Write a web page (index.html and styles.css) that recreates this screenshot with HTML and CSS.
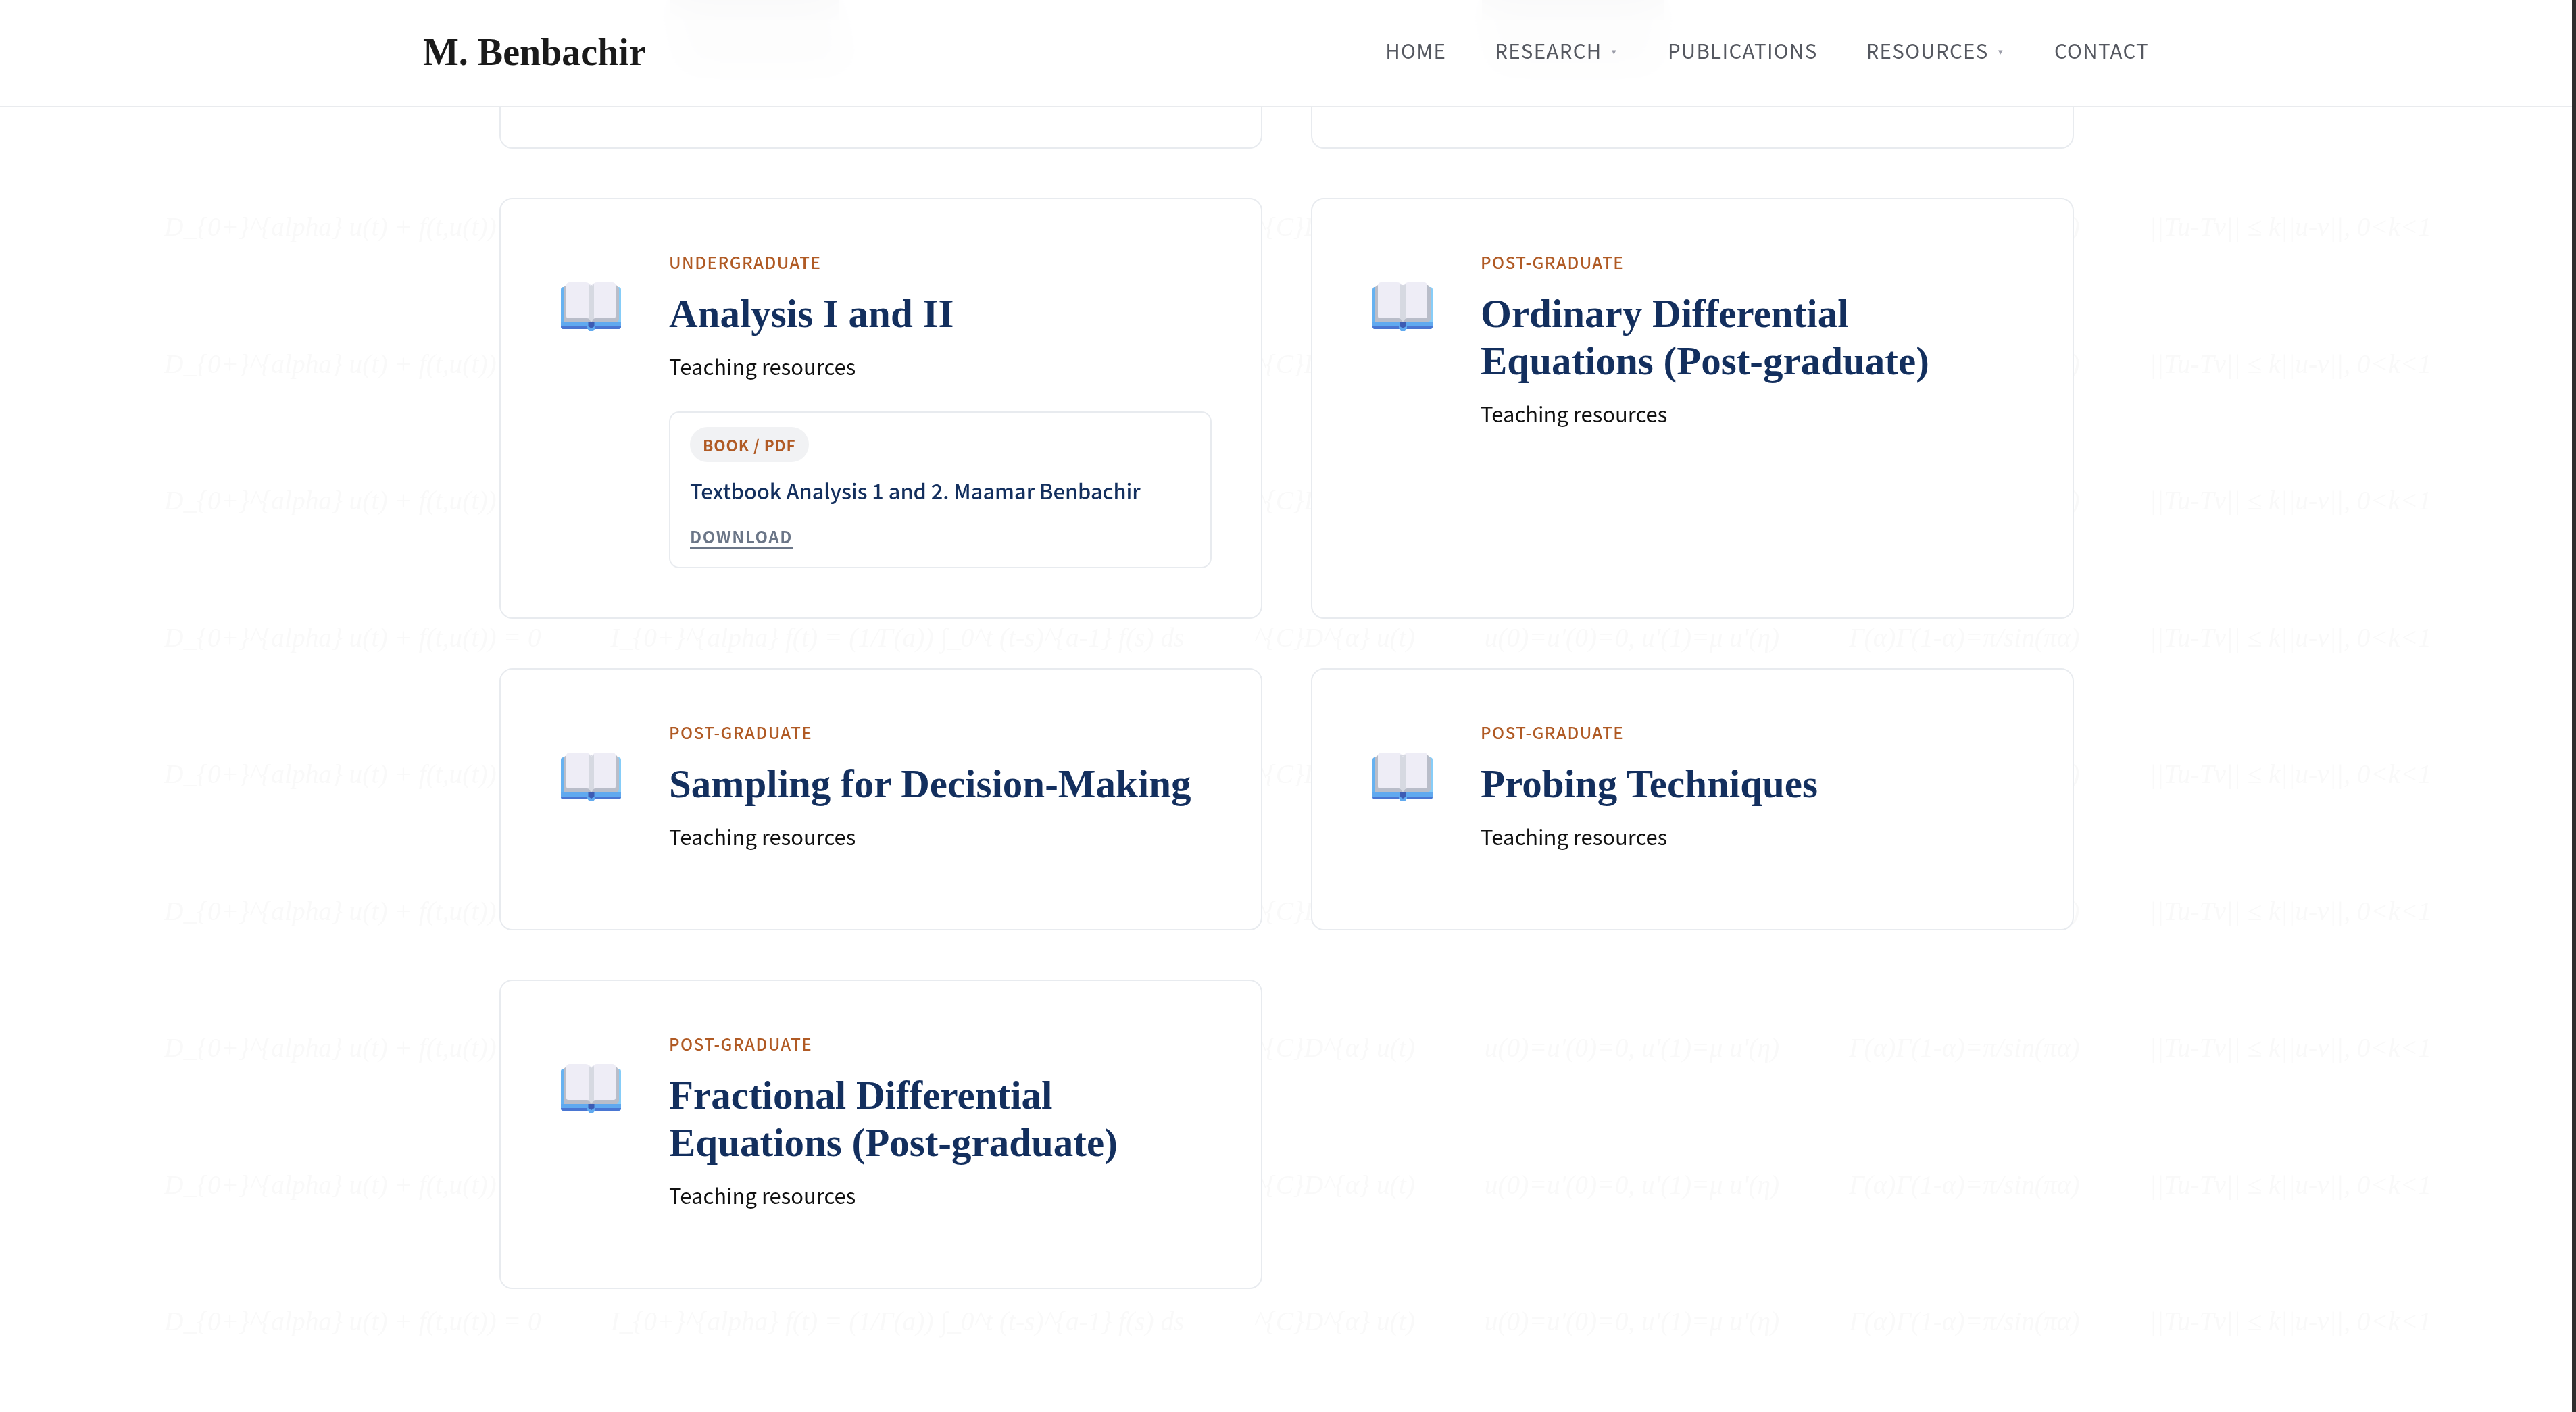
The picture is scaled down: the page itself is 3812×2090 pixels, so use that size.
FILE: index.html
```html
<!DOCTYPE html>
<html lang="en">
<head>
<meta charset="utf-8">
<title>M. Benbachir</title>
<link rel="stylesheet" href="styles.css">
</head>
<body>
<div class="formulas" aria-hidden="true">
  <div class="formula-row"><span>D_{0+}^{alpha} u(t) + f(t,u(t)) = 0</span><span>I_{0+}^{alpha} f(t) = (1/Γ(a)) ∫_0^t (t-s)^{a-1} f(s) ds</span><span>^{C}D^{α} u(t)</span><span>u(0)=u'(0)=0, u'(1)=μ u'(η)</span><span>Γ(α)Γ(1-α)=π/sin(πα)</span><span>||Tu-Tv|| ≤ k||u-v||, 0&lt;k&lt;1</span></div>
  <div class="formula-row"><span>D_{0+}^{alpha} u(t) + f(t,u(t)) = 0</span><span>I_{0+}^{alpha} f(t) = (1/Γ(a)) ∫_0^t (t-s)^{a-1} f(s) ds</span><span>^{C}D^{α} u(t)</span><span>u(0)=u'(0)=0, u'(1)=μ u'(η)</span><span>Γ(α)Γ(1-α)=π/sin(πα)</span><span>||Tu-Tv|| ≤ k||u-v||, 0&lt;k&lt;1</span></div>
  <div class="formula-row"><span>D_{0+}^{alpha} u(t) + f(t,u(t)) = 0</span><span>I_{0+}^{alpha} f(t) = (1/Γ(a)) ∫_0^t (t-s)^{a-1} f(s) ds</span><span>^{C}D^{α} u(t)</span><span>u(0)=u'(0)=0, u'(1)=μ u'(η)</span><span>Γ(α)Γ(1-α)=π/sin(πα)</span><span>||Tu-Tv|| ≤ k||u-v||, 0&lt;k&lt;1</span></div>
  <div class="formula-row"><span>D_{0+}^{alpha} u(t) + f(t,u(t)) = 0</span><span>I_{0+}^{alpha} f(t) = (1/Γ(a)) ∫_0^t (t-s)^{a-1} f(s) ds</span><span>^{C}D^{α} u(t)</span><span>u(0)=u'(0)=0, u'(1)=μ u'(η)</span><span>Γ(α)Γ(1-α)=π/sin(πα)</span><span>||Tu-Tv|| ≤ k||u-v||, 0&lt;k&lt;1</span></div>
  <div class="formula-row"><span>D_{0+}^{alpha} u(t) + f(t,u(t)) = 0</span><span>I_{0+}^{alpha} f(t) = (1/Γ(a)) ∫_0^t (t-s)^{a-1} f(s) ds</span><span>^{C}D^{α} u(t)</span><span>u(0)=u'(0)=0, u'(1)=μ u'(η)</span><span>Γ(α)Γ(1-α)=π/sin(πα)</span><span>||Tu-Tv|| ≤ k||u-v||, 0&lt;k&lt;1</span></div>
  <div class="formula-row"><span>D_{0+}^{alpha} u(t) + f(t,u(t)) = 0</span><span>I_{0+}^{alpha} f(t) = (1/Γ(a)) ∫_0^t (t-s)^{a-1} f(s) ds</span><span>^{C}D^{α} u(t)</span><span>u(0)=u'(0)=0, u'(1)=μ u'(η)</span><span>Γ(α)Γ(1-α)=π/sin(πα)</span><span>||Tu-Tv|| ≤ k||u-v||, 0&lt;k&lt;1</span></div>
  <div class="formula-row"><span>D_{0+}^{alpha} u(t) + f(t,u(t)) = 0</span><span>I_{0+}^{alpha} f(t) = (1/Γ(a)) ∫_0^t (t-s)^{a-1} f(s) ds</span><span>^{C}D^{α} u(t)</span><span>u(0)=u'(0)=0, u'(1)=μ u'(η)</span><span>Γ(α)Γ(1-α)=π/sin(πα)</span><span>||Tu-Tv|| ≤ k||u-v||, 0&lt;k&lt;1</span></div>
  <div class="formula-row"><span>D_{0+}^{alpha} u(t) + f(t,u(t)) = 0</span><span>I_{0+}^{alpha} f(t) = (1/Γ(a)) ∫_0^t (t-s)^{a-1} f(s) ds</span><span>^{C}D^{α} u(t)</span><span>u(0)=u'(0)=0, u'(1)=μ u'(η)</span><span>Γ(α)Γ(1-α)=π/sin(πα)</span><span>||Tu-Tv|| ≤ k||u-v||, 0&lt;k&lt;1</span></div>
  <div class="formula-row"><span>D_{0+}^{alpha} u(t) + f(t,u(t)) = 0</span><span>I_{0+}^{alpha} f(t) = (1/Γ(a)) ∫_0^t (t-s)^{a-1} f(s) ds</span><span>^{C}D^{α} u(t)</span><span>u(0)=u'(0)=0, u'(1)=μ u'(η)</span><span>Γ(α)Γ(1-α)=π/sin(πα)</span><span>||Tu-Tv|| ≤ k||u-v||, 0&lt;k&lt;1</span></div>
  <div class="formula-row"><span>D_{0+}^{alpha} u(t) + f(t,u(t)) = 0</span><span>I_{0+}^{alpha} f(t) = (1/Γ(a)) ∫_0^t (t-s)^{a-1} f(s) ds</span><span>^{C}D^{α} u(t)</span><span>u(0)=u'(0)=0, u'(1)=μ u'(η)</span><span>Γ(α)Γ(1-α)=π/sin(πα)</span><span>||Tu-Tv|| ≤ k||u-v||, 0&lt;k&lt;1</span></div>
</div>

<header class="site-header">
  <div class="header-inner">
    <a class="logo" href="#">M. Benbachir</a>
    <nav class="nav">
      <a href="#">HOME</a>
      <a href="#">RESEARCH<span class="caret">▾</span></a>
      <a href="#">PUBLICATIONS</a>
      <a href="#">RESOURCES<span class="caret">▾</span></a>
      <a href="#">CONTACT</a>
    </nav>
  </div>
</header>

<main class="grid">
  <article class="card card-under">
    <div class="ghost ghost-title"></div>
    <div class="ghost ghost-desc"></div>
  </article>
  <article class="card card-under">
    <div class="ghost ghost-title ghost-wide"></div>
    <div class="ghost ghost-desc"></div>
  </article>

  <article class="card">
    <div class="icon"><svg class="book" viewBox="0 0 89 74"><use href="#book-art"/></svg></div>
    <div class="body">
      <div class="tag">UNDERGRADUATE</div>
      <h2 class="title">Analysis I and II</h2>
      <p class="desc">Teaching resources</p>
      <div class="resource">
        <span class="pill">BOOK / PDF</span>
        <a class="res-title" href="#">Textbook Analysis 1 and 2. Maamar Benbachir</a>
        <a class="download" href="#">DOWNLOAD</a>
      </div>
    </div>
  </article>
  <article class="card">
    <div class="icon"><svg class="book" viewBox="0 0 89 74"><use href="#book-art"/></svg></div>
    <div class="body"><div class="tag">POST-GRADUATE</div><h2 class="title">Ordinary Differential Equations (Post-graduate)</h2><p class="desc">Teaching resources</p></div>
  </article>

  <article class="card">
    <div class="icon"><svg class="book" viewBox="0 0 89 74"><use href="#book-art"/></svg></div>
    <div class="body"><div class="tag">POST-GRADUATE</div><h2 class="title">Sampling for Decision-Making</h2><p class="desc">Teaching resources</p></div>
  </article>
  <article class="card">
    <div class="icon"><svg class="book" viewBox="0 0 89 74"><use href="#book-art"/></svg></div>
    <div class="body"><div class="tag">POST-GRADUATE</div><h2 class="title">Probing Techniques</h2><p class="desc">Teaching resources</p></div>
  </article>

  <article class="card">
    <div class="icon"><svg class="book" viewBox="0 0 89 74"><use href="#book-art"/></svg></div>
    <div class="body"><div class="tag">POST-GRADUATE</div><h2 class="title">Fractional Differential Equations (Post-graduate)</h2><p class="desc">Teaching resources</p></div>
  </article>
</main>

<div class="scrollbar"></div>

<svg class="defs" width="0" height="0" aria-hidden="true">
  <defs>
    <g id="book-art">
      <path d="M4 8h41v62H4a4 4 0 0 1-4-4V12a4 4 0 0 1 4-4z" fill="#66b2f1"/>
      <path d="M45 8h40a4 4 0 0 1 4 4v54a4 4 0 0 1-4 4H45z" fill="#86cdf8"/>
      <path d="M0 60h89v6a4 4 0 0 1-4 4H4a4 4 0 0 1-4-4z" fill="#60a9ef"/>
      <path d="M0 66h89a4 4 0 0 1-4 4H4a4 4 0 0 1-4-4z" fill="#4a76d2"/>
      <path d="M39 60h12v9l-3 4h-6l-3-4z" fill="#60a9ef"/>
      <path d="M40.500 60h9v6l-4.500 3-4.500-3z" fill="#3d5cb4"/>
      <path d="M4 8l4-3h74l4 5v46l-3 4H4z" fill="#b9bdc9"/>
      <path d="M8 5c0-2 2-4 5-4h23c4 0 7 2 9 5v51c-2-3-5-3-9-3H11c-2 0-3-1-3-3z" fill="#eeedf6"/>
      <path d="M81 5c0-2-2-4-5-4H54c-4 0-7 2-9 5v51c2-3 5-3 9-3h24c2 0 3-1 3-3z" fill="#eeedf6"/>
      <path d="M41 4c2 1 3 2 4 3 1-1 2-2 4-3v50l-4 6-4-6z" fill="#d6d9e1"/>
    </g>
  </defs>
</svg>
</body>
</html>
```

FILE: styles.css
```css
* { box-sizing: border-box; }
html, body { margin: 0; height: 100%; }
body {
  background: #fff;
  color: #111;
  font-family: "Noto Sans CJK SC", "Noto Sans", sans-serif;
  overflow: hidden;
  padding-right: 4px;
}
a { text-decoration: none; color: inherit; }
.defs { position: absolute; }

.formulas {
  position: fixed;
  inset: 0;
  z-index: -1;
  padding-top: 33px;
  overflow: hidden;
}
.formula-row {
  display: flex;
  gap: 103px;
  height: 202.500px;
  padding-left: 243px;
  align-items: center;
  white-space: nowrap;
  font: italic 39.400px/1 "Liberation Serif", serif;
  color: #f9f9f9;
}

.site-header {
  position: fixed;
  top: 0;
  left: 0;
  right: 6px;
  height: 159px;
  background: rgba(255, 255, 255, 0.92);
  backdrop-filter: blur(30px);
  border-bottom: 2px solid #e9ebee;
  z-index: 10;
}
.header-inner {
  width: 2554px;
  height: 100%;
  margin: 0 auto;
  display: flex;
  align-items: center;
  justify-content: space-between;
}
.logo {
  margin-bottom: 4px;
  font: 700 56px/1 "Liberation Serif", serif;
  color: #1a1a1a;
}
.nav {
  display: flex;
  gap: 72px;
  margin-bottom: 9px;
  font-size: 29.500px;
  letter-spacing: 1.300px;
  color: #555860;
}
.caret {
  font-size: 13px;
  margin: 0 3px 0 14px;
  color: #9a9ca8;
  vertical-align: 6px;
}

.grid {
  width: 2330px;
  margin: -237px auto 0;
  display: grid;
  grid-template-columns: 1129px 1129px;
  gap: 73px 72px;
}
.card {
  background: #fff;
  border: 2px solid #e8ebef;
  border-radius: 19px;
  padding: 73px;
  display: flex;
  gap: 56px;
}
.card-under {
  height: 457px;
  flex-direction: column;
  justify-content: flex-end;
  gap: 37px;
  padding: 0 0 125px 251px;
}
.ghost {
  height: 26px;
  width: 260px;
  margin-left: 8px;
  background: #b8b8bb;
  flex: none;
}
.ghost-title { width: 250px; height: 40px; margin-left: 0; background: #b4b4b8; }
.ghost-wide { width: 270px; }
.icon {
  width: 120px;
  flex: none;
  display: flex;
  justify-content: center;
  align-items: flex-start;
}
.book { width: 89px; height: 74px; margin-top: 49px; }
.body { flex: 1; min-width: 0; }
.tag {
  font-size: 24px;
  line-height: 39px;
  font-weight: 500;
  letter-spacing: 1.500px;
  color: #b05a24;
}
.title {
  margin: 22px 0 0;
  font: 700 59px/70px "Liberation Serif", serif;
  color: #132f5e;
}
.desc {
  margin: 16px 0 37px;
  font-size: 31px;
  line-height: 54px;
  color: #111;
}
.resource {
  margin-top: 40px;
  border: 2px solid #e8ebef;
  border-radius: 15px;
  padding: 21px 29px 27px;
  display: flex;
  flex-direction: column;
  align-items: flex-start;
}
.pill {
  height: 52px;
  line-height: 52px;
  padding: 0 19px;
  border-radius: 26px;
  background: #f1f2f4;
  color: #b05a24;
  font-size: 22.500px;
  font-weight: 700;
  letter-spacing: 0.900px;
}
.res-title {
  margin-top: 17px;
  font-size: 30.700px;
  line-height: 50px;
  font-weight: 500;
  color: #132f5e;
}
.download {
  margin-top: 27px;
  font-size: 24px;
  line-height: 32px;
  font-weight: 700;
  letter-spacing: 1.600px;
  color: #6b7688;
  border-bottom: 2px solid #6b7688;
}
.scrollbar {
  position: fixed;
  top: 0;
  right: 0;
  bottom: 0;
  width: 6px;
  background: #2e2e2e;
}
```
